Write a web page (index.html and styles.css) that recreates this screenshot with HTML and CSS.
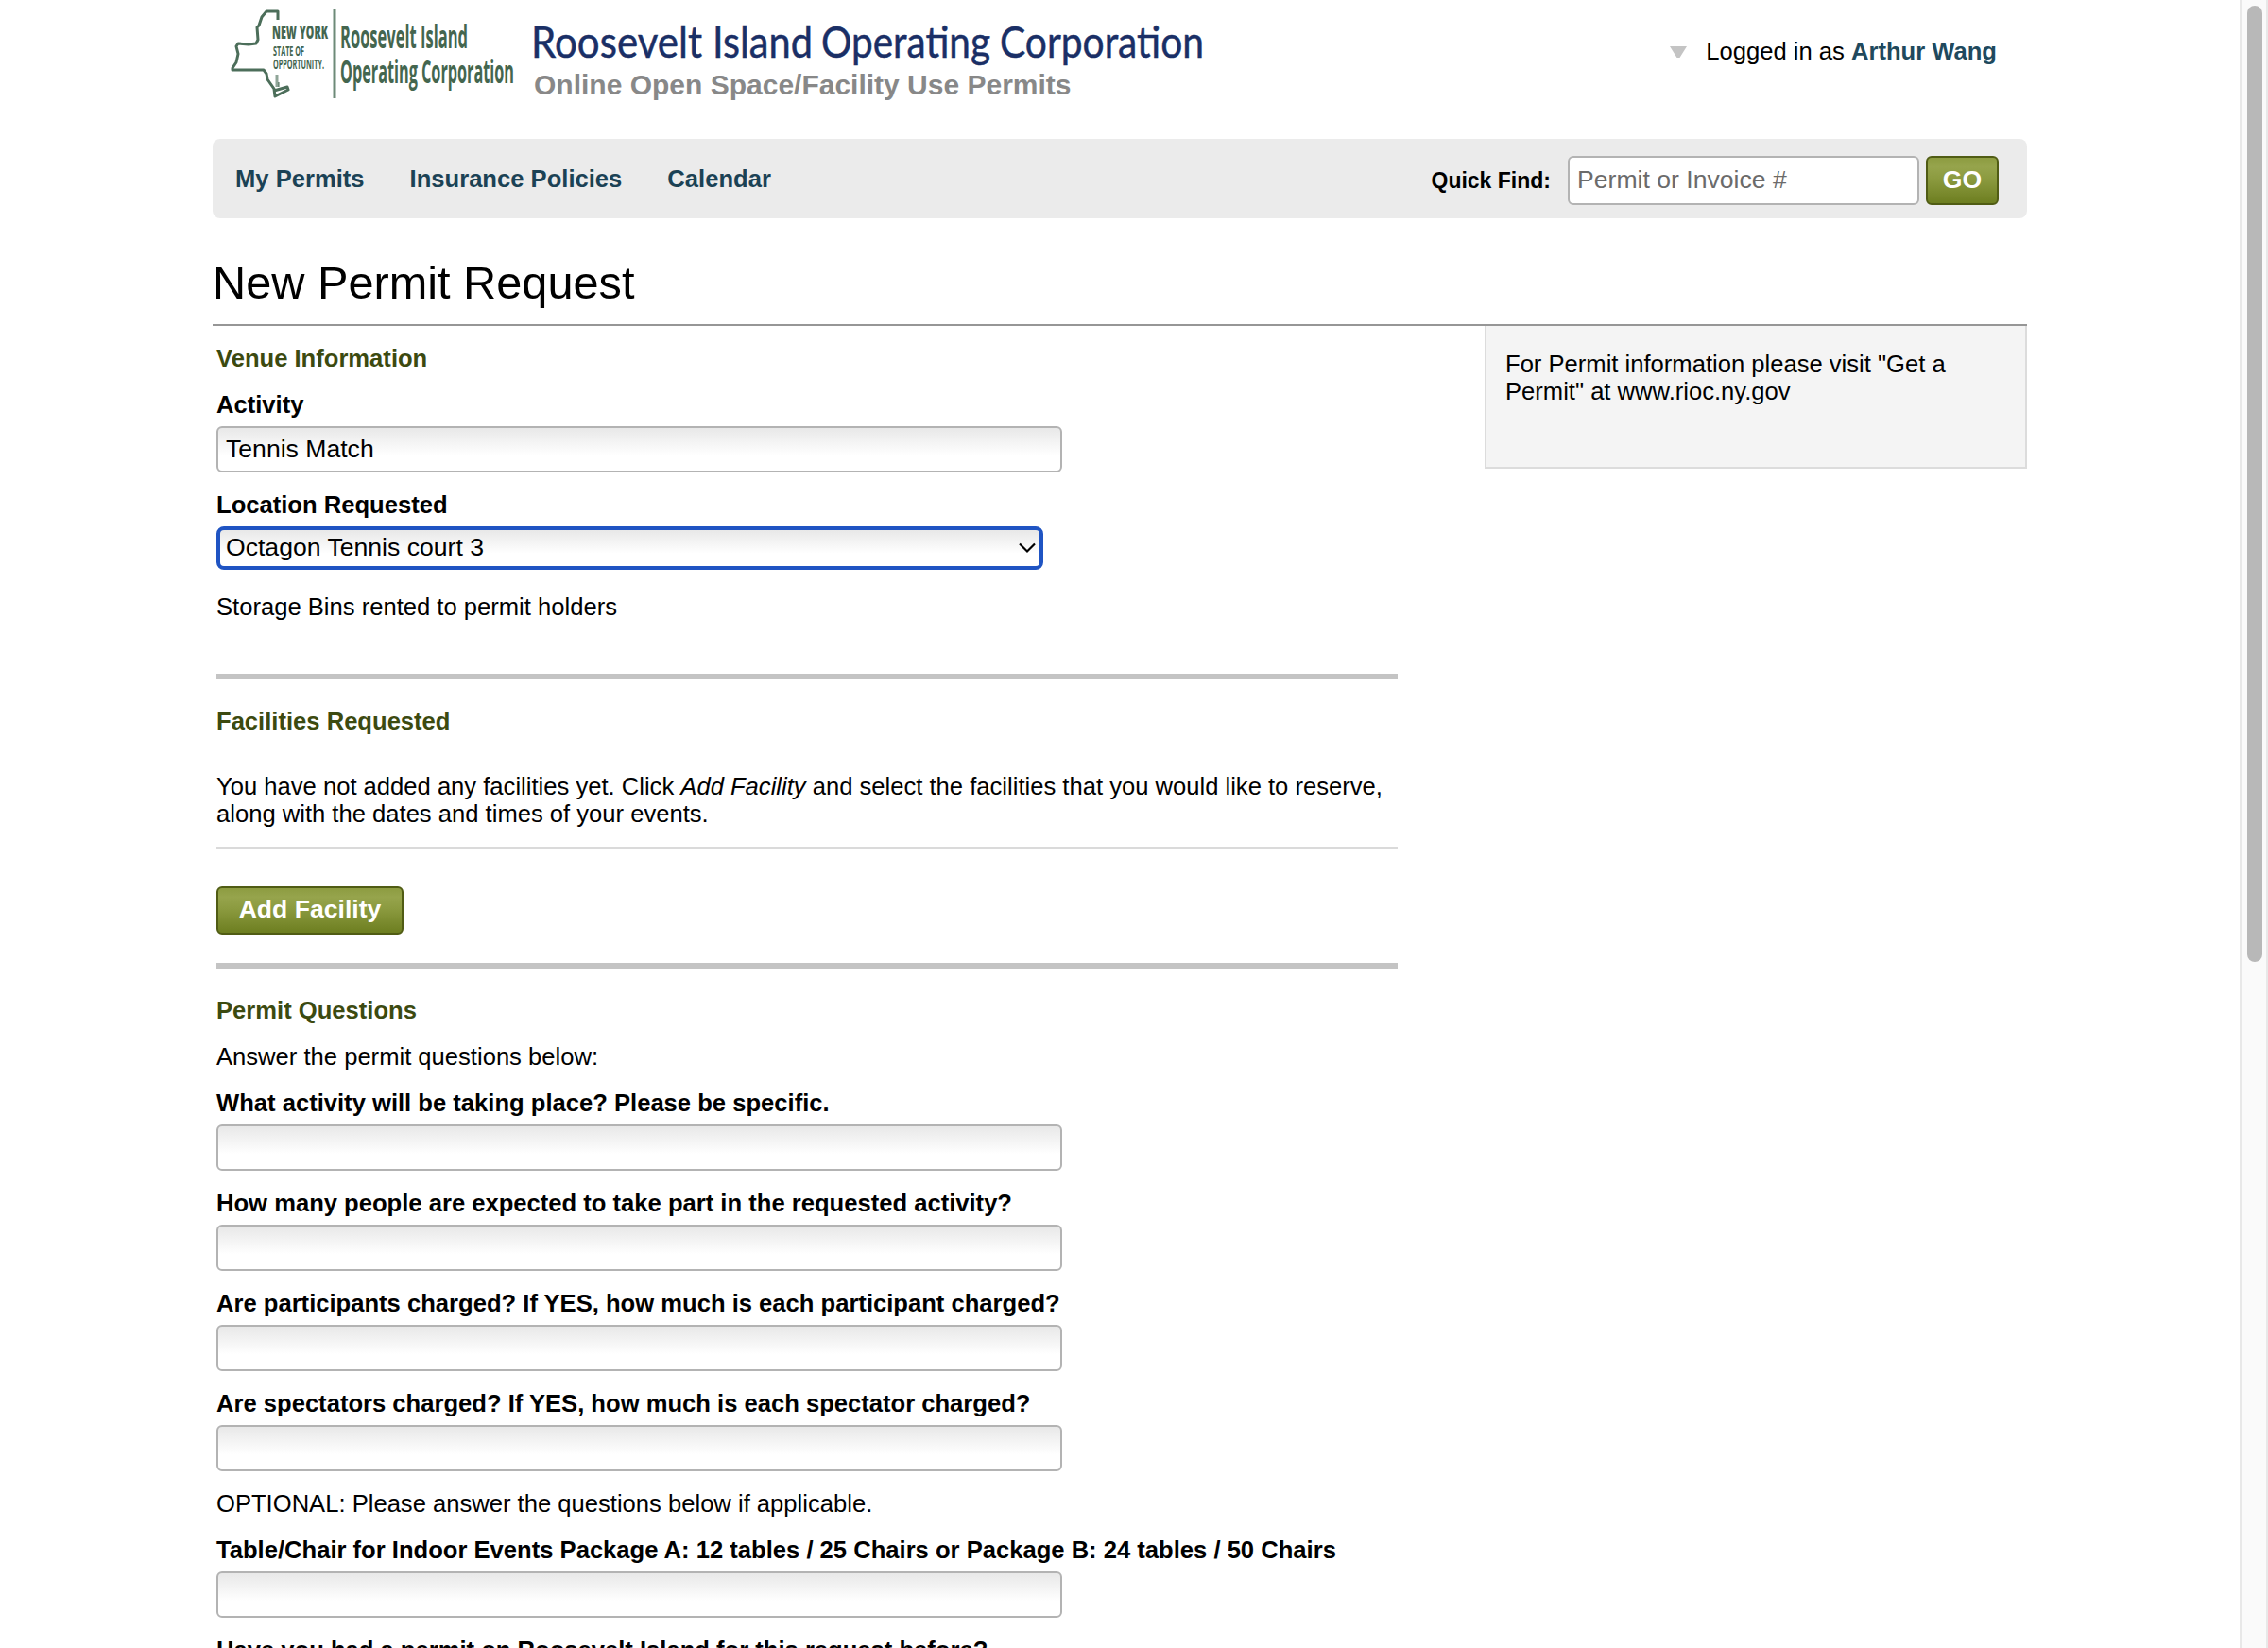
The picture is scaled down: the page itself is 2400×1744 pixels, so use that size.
FILE: index.html
```html
<!DOCTYPE html>
<html lang="en">
<head>
<meta charset="utf-8">
<title>New Permit Request</title>
<link rel="stylesheet" href="styles.css">
</head>
<body>
<div class="window">
  <div class="viewport">
    <div class="page">
      <header class="header">
        <svg class="logo" width="300" height="94" viewBox="0 0 300 94">
          <g fill="none" stroke="#4c6e5a" stroke-width="3" stroke-linejoin="round">
            <path d="M49 11V2H37L32 8L29 17L27 19L28 32L26 36L18 37L7 36L5 39L7 47L5 56L1 62V64H34L37 68L38 74L45 84L46 92L60 85L59 82L45 86M49 77V82"/>
          </g>
          <path d="M48 69V82" stroke="#8fa598" stroke-width="3"/>
          <path d="M109 0V94" stroke="#6d8a78" stroke-width="3"/>
          <g class="logo-text">
            <text x="43" y="31" font-size="20" font-weight="800" textLength="59" lengthAdjust="spacingAndGlyphs">NEW YORK</text>
            <text x="44" y="49" font-size="14" font-weight="700" textLength="33" lengthAdjust="spacingAndGlyphs">STATE OF</text>
            <text x="44" y="63" font-size="14" font-weight="700" textLength="54" lengthAdjust="spacingAndGlyphs">OPPORTUNITY.</text>
            <text x="115" y="41" font-size="34" font-weight="700" textLength="135" lengthAdjust="spacingAndGlyphs">Roosevelt Island</text>
            <text x="115" y="78" font-size="34" font-weight="700" textLength="184" lengthAdjust="spacingAndGlyphs">Operating Corporation</text>
          </g>
        </svg>
        <div class="brand">
          <svg class="brand-name" width="712" height="60" viewBox="0 0 712 60">
            <text y="47"><tspan x="-3" textLength="181" lengthAdjust="spacingAndGlyphs">Roosevelt</tspan> <tspan x="189" textLength="106" lengthAdjust="spacingAndGlyphs">Island</tspan> <tspan x="304" textLength="179" lengthAdjust="spacingAndGlyphs">Operating</tspan> <tspan x="493" textLength="216" lengthAdjust="spacingAndGlyphs">Corporation</tspan></text>
          </svg>
          <div class="brand-sub">Online Open Space/Facility Use Permits</div>
        </div>
        <div class="user">
          <svg width="18" height="14" viewBox="0 0 18 14"><path d="M0 1H18L10.500 13H7.500Z" fill="#c4c4c4"/></svg>
          <span>Logged in as <a class="link" href="#">Arthur Wang</a></span>
        </div>
      </header>

      <nav class="nav">
        <a href="#">My Permits</a>
        <a href="#">Insurance Policies</a>
        <a href="#">Calendar</a>
        <form class="find">
          <label for="find">Quick Find:</label>
          <input id="find" class="find-input" placeholder="Permit or Invoice #">
          <button class="btn btn-go" type="button">GO</button>
        </form>
      </nav>

      <h1 class="title">New Permit Request</h1>

      <div class="columns">
        <main class="form">
          <h2>Venue Information</h2>
          <div class="field">
            <label for="activity">Activity</label>
            <input id="activity" value="Tennis Match">
          </div>
          <div class="field">
            <label for="location">Location Requested</label>
            <div class="select">
              <select id="location"><option>Octagon Tennis court 3</option></select>
              <svg class="chevron" width="20" height="14" viewBox="0 0 20 14"><path d="M2 2.500L10 10.500L18 2.500" fill="none" stroke="#000" stroke-width="2.200"/></svg>
            </div>
          </div>
          <p class="note">Storage Bins rented to permit holders</p>

          <hr class="rule">
          <h2>Facilities Requested</h2>
          <p class="empty">You have not added any facilities yet. Click <em>Add Facility</em> and select the facilities that you would like to reserve,<br>along with the dates and times of your events.</p>
          <button class="btn btn-add" type="button">Add Facility</button>

          <hr class="rule">
          <h2>Permit Questions</h2>
          <p class="text">Answer the permit questions below:</p>
          <div class="field">
            <label for="q1">What activity will be taking place? Please be specific.</label>
            <input id="q1">
          </div>
          <div class="field">
            <label for="q2">How many people are expected to take part in the requested activity?</label>
            <input id="q2">
          </div>
          <div class="field">
            <label for="q3">Are participants charged? If YES, how much is each participant charged?</label>
            <input id="q3">
          </div>
          <div class="field">
            <label for="q4">Are spectators charged? If YES, how much is each spectator charged?</label>
            <input id="q4">
          </div>
          <p class="text">OPTIONAL: Please answer the questions below if applicable.</p>
          <div class="field">
            <label for="q5">Table/Chair for Indoor Events Package A: 12 tables / 25 Chairs or Package B: 24 tables / 50 Chairs</label>
            <input id="q5">
          </div>
          <div class="field">
            <label>Have you had a permit on Roosevelt Island for this request before?</label>
          </div>
        </main>
        <aside class="info">For Permit information please visit "Get a Permit" at www.rioc.ny.gov</aside>
      </div>
    </div>
  </div>
  <div class="scrollbar"><div class="thumb"></div></div>
</div>
</body>
</html>
```
FILE: styles.css
```css
* {
  box-sizing: border-box;
}

body {
  margin: 0;
  background: #fff;
  color: #000;
  font: 25.6px/29px "Liberation Sans", Arial, sans-serif;
}

h1, h2, p, hr {
  margin: 0;
}

a {
  color: #1b4255;
  font-weight: bold;
  text-decoration: none;
}

input, select, button {
  font-family: inherit;
}

.window {
  display: flex;
  height: 1744px;
  overflow: hidden;
}

.viewport {
  flex: 1;
  overflow: hidden;
}

.page {
  width: 1920px;
  margin-left: 225px;
}

/* Header */
.header {
  display: flex;
  height: 147px;
  padding: 10px 32px 0 20px;
}

.logo {
  overflow: visible;
}

.logo-text {
  fill: #44664f;
  font-family: "Open Sans", "Noto Sans", sans-serif;
}

.brand {
  margin-left: 20px;
}

.brand-name {
  display: block;
  margin-top: 4px;
  overflow: visible;
}

.brand-name text {
  fill: #1a2f66;
  stroke: #1a2f66;
  stroke-width: 0.5px;
  font: 46px Lato, "Noto Sans", sans-serif;
}

.brand-sub {
  margin-top: -1px;
  color: #888;
  font-size: 30px;
  font-weight: bold;
  line-height: 34px;
}

.user {
  display: flex;
  align-items: center;
  gap: 20px;
  height: 29px;
  margin: 30px 0 0 auto;
}

.link {
  color: #20495d;
}

/* Navigation */
.nav {
  display: flex;
  align-items: center;
  gap: 48px;
  height: 84px;
  padding: 0 30px 0 24px;
  border-radius: 8px;
  background: #ebebeb;
}

.find {
  display: flex;
  align-items: center;
  margin: 4px 0 0 auto;
}

.find label {
  margin-right: 18px;
  font-size: 23px;
  font-weight: bold;
}

.find-input {
  width: 372px;
  height: 52px;
  margin-right: 7px;
  padding: 0 8px 2px;
  border: 2px solid #b3b3b3;
  border-radius: 6px;
  background: #fff;
  font-size: 26.6px;
}

.find-input::placeholder {
  color: #6b6b6b;
}

.btn {
  display: block;
  padding: 0 0 2px;
  border: 2px solid #505c14;
  border-radius: 6px;
  background: linear-gradient(#8d9c41, #96a44c 20%, #8c9b40 45%, #6d7e20);
  color: #fff;
  font-size: 26.6px;
  font-weight: bold;
}

.btn-go {
  width: 77px;
  height: 52px;
}

.btn-add {
  width: 198px;
  height: 51px;
  margin: 40px 0 30px;
}

/* Content */
.title {
  height: 114px;
  padding-top: 40px;
  border-bottom: 2px solid #969696;
  font-size: 48.7px;
  font-weight: normal;
  line-height: 56px;
}

.columns {
  display: flex;
  justify-content: space-between;
  align-items: flex-start;
}

.form {
  width: 1250px;
  margin: 20px 0 0 4px;
}

h2 {
  color: #3c4a10;
  font-size: 25.6px;
  line-height: 29px;
}

.field {
  margin-top: 20px;
}

.field label {
  display: block;
  font-weight: bold;
  white-space: nowrap;
}

.field input {
  display: block;
  width: 895px;
  height: 49px;
  margin-top: 8px;
  padding: 0 8px 1px;
  border: 2px solid #b3b3b3;
  border-radius: 6px;
  background: linear-gradient(#e8e8e8, #fff 65%);
  font-size: 26.6px;
}

.select {
  position: relative;
  width: 875px;
  margin-top: 8px;
}

.select select {
  display: block;
  width: 100%;
  height: 46px;
  padding: 0 6px 2px;
  border: 4px solid #1f54c3;
  border-radius: 8px;
  background: linear-gradient(#e8e8e8, #fff 65%);
  color: #000;
  font-size: 26.6px;
  appearance: none;
}

.chevron {
  position: absolute;
  top: 16px;
  right: 7px;
}

.note {
  margin: 25px 0 56px;
}

.rule {
  height: 6px;
  margin-bottom: 30px;
  border: 0;
  background: #c4c4c4;
}

.text {
  margin-top: 20px;
}

.empty {
  margin-top: 40px;
  padding-bottom: 20px;
  border-bottom: 2px solid #dadada;
  white-space: nowrap;
}

.info {
  width: 574px;
  height: 151px;
  padding: 26px 60px 0 20px;
  border: 2px solid #dcdcdc;
  border-top: 0;
  background: #f4f4f4;
}

/* Scrollbar */
.scrollbar {
  width: 30px;
  padding: 6px 4px 0 6px;
  border: solid #e8e8e8;
  border-width: 0 2px;
  background: #fafafa;
}

.thumb {
  width: 16px;
  height: 1012px;
  border-radius: 8px;
  background: #b8b8b8;
}
```
